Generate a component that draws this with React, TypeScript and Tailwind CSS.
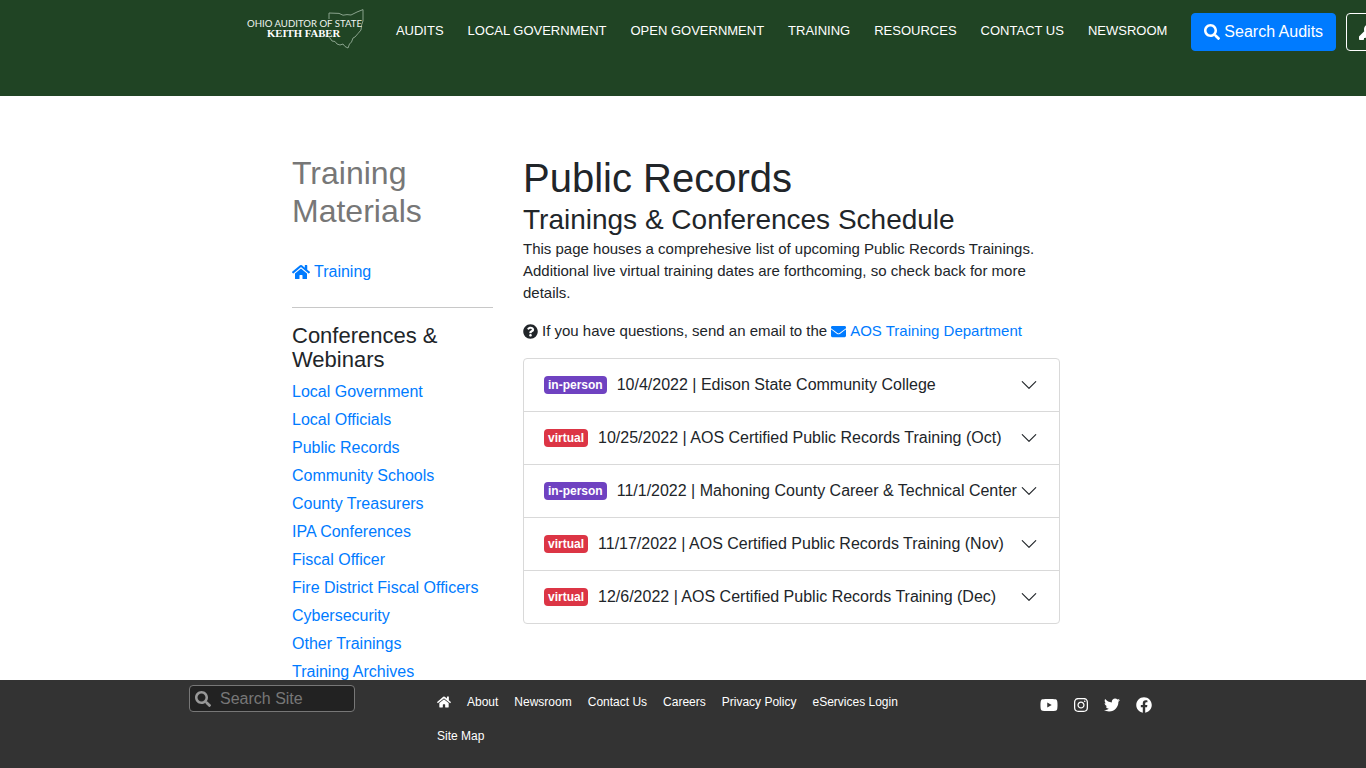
import React from "react";
import {
  FaSearch, FaHome, FaQuestionCircle, FaEnvelope, FaKey,
  FaYoutube, FaInstagram, FaTwitter, FaFacebook,
} from "react-icons/fa";
import { BsChevronDown } from "react-icons/bs";

const navItems = ["AUDITS", "LOCAL GOVERNMENT", "OPEN GOVERNMENT", "TRAINING", "RESOURCES", "CONTACT US", "NEWSROOM"];

const sideLinks = [
  "Local Government", "Local Officials", "Public Records", "Community Schools", "County Treasurers",
  "IPA Conferences", "Fiscal Officer", "Fire District Fiscal Officers", "Cybersecurity",
  "Other Trainings", "Training Archives",
];

const trainings = [
  { kind: "in-person", title: "10/4/2022 | Edison State Community College" },
  { kind: "virtual", title: "10/25/2022 | AOS Certified Public Records Training (Oct)" },
  { kind: "in-person", title: "11/1/2022 | Mahoning County Career & Technical Center" },
  { kind: "virtual", title: "11/17/2022 | AOS Certified Public Records Training (Nov)" },
  { kind: "virtual", title: "12/6/2022 | AOS Certified Public Records Training (Dec)" },
];

const footerLinks = ["About", "Newsroom", "Contact Us", "Careers", "Privacy Policy", "eServices Login", "Site Map"];

const socials = [
  { name: "YouTube", Icon: FaYoutube, size: "h-4 w-[18px]" },
  { name: "Instagram", Icon: FaInstagram, size: "h-4 w-[14px]" },
  { name: "Twitter", Icon: FaTwitter, size: "size-4" },
  { name: "Facebook", Icon: FaFacebook, size: "size-4" },
];

function Logo() {
  return (
    <svg width="118" height="42" viewBox="0 0 118 42" role="img" aria-label="Ohio Auditor of State Keith Faber">
      <path
        d="M83 11V5L93 5.4L97 7.2L101 6.6L105 7L111 4L117 1.6V13L115.6 17L115 22L112 25.500L109 29L107 30L105.500 34L103.500 36L102 40L99 38.500L97 36L94 37L91 36L89 33.500L86 33L84 30L82.500 29"
        fill="none" stroke="#94ad97" strokeWidth="0.9" strokeLinejoin="round"
      />
      <text x="1" y="19" fontSize="9.6" fill="#eef3ee" className="font-[Lato,sans-serif]">OHIO AUDITOR OF STATE</text>
      <text x="21" y="29" fontSize="10.7" fontWeight="700" fill="#ffffff" className="font-['Liberation_Serif',serif]">KEITH FABER</text>
    </svg>
  );
}

export default function App() {
  return (
    <div className="flex h-screen flex-col overflow-hidden bg-white font-['Liberation_Sans',Arial,sans-serif] text-base text-[#212529]">
      <header className="flex h-24 shrink-0 items-start overflow-hidden bg-[#204424] pl-[18%] whitespace-nowrap">
        <a href="#home" className="mt-2 mr-5 shrink-0"><Logo /></a>
        <nav className="mt-5 flex shrink-0 text-[13px] leading-[22px] text-white">
          {navItems.map((item) => (
            <a key={item} href="#nav" className="px-3">{item}</a>
          ))}
        </nav>
        <button className="mt-[13px] ml-3 flex h-[38px] shrink-0 items-center gap-1 rounded border border-[#007bff] bg-[#007bff] px-3 text-white">
          <FaSearch className="size-4" />Search Audits
        </button>
        <button aria-label="Login" className="mt-[13px] ml-[10px] flex h-[38px] shrink-0 items-center rounded border border-white px-3 text-white">
          <FaKey className="size-4" />
        </button>
      </header>

      <main className="min-h-0 flex-1 overflow-y-auto [scrollbar-width:none]">
        <div className="mx-auto flex max-w-[782px] gap-[30px] pt-[58px] pr-[14px]">
          <aside className="w-[201px] shrink-0">
            <h2 className="text-[32px] leading-[38px] text-[#777777]">Training Materials</h2>
            <a href="#training" className="mt-[30px] flex items-center gap-1 leading-6 text-[#007bff]">
              <FaHome className="size-[18px]" />Training
            </a>
            <hr className="mt-[23px] mb-4 border-[#c8c8c8]" />
            <h3 className="text-[22px] leading-6">Conferences &amp; Webinars</h3>
            <ul className="mt-2">
              {sideLinks.map((link) => (
                <li key={link} className="mb-1 leading-6 whitespace-nowrap">
                  <a href="#list" className="text-[#007bff]">{link}</a>
                </li>
              ))}
            </ul>
          </aside>

          <section className="min-w-0 flex-1">
            <h1 className="text-[40px] leading-12">Public Records</h1>
            <h2 className="text-[28px] leading-9">Trainings &amp; Conferences Schedule</h2>
            <p className="text-[15px] leading-[22px]">
              This page houses a comprehesive list of upcoming Public Records Trainings. Additional live virtual
              training dates are forthcoming, so check back for more details.
            </p>
            <p className="mt-4 flex items-center gap-1 text-[15px] leading-[22px] whitespace-nowrap">
              <FaQuestionCircle className="size-[15px]" />
              If you have questions, send an email to the
              <a href="#email" className="flex items-center gap-1 text-[#007bff]">
                <FaEnvelope className="size-[15px]" />AOS Training Department
              </a>
            </p>
            <div className="mt-4 divide-y divide-[#d9d9d9] rounded border border-[#d9d9d9]">
              {trainings.map(({ kind, title }) => (
                <button key={title} className="flex w-full items-center py-[14px] pr-[21px] pl-5 text-left leading-6 whitespace-nowrap">
                  <span className={kind === "virtual"
                    ? "rounded bg-[#dc3545] px-1 text-[12px] leading-[18px] font-bold text-white"
                    : "rounded bg-[#6f42c1] px-1 text-[12px] leading-[18px] font-bold text-white"}>
                    {kind}
                  </span>
                  <span className="ml-[10px] min-w-0 flex-1">{title}</span>
                  <BsChevronDown className="size-[18px] shrink-0" />
                </button>
              ))}
            </div>
          </section>
        </div>
      </main>

      <footer className="h-[88px] shrink-0 bg-[#333333] text-white">
        <div className="mx-auto flex max-w-[988px] items-start pr-[25px]">
          <label className="mt-[5px] flex h-[27px] w-[166px] items-center gap-[9px] rounded border border-[#777777] bg-[#222222] pl-[5px]">
            <FaSearch className="size-4 shrink-0 text-[#999999]" />
            <input type="search" aria-label="Search Site" placeholder="Search Site" className="w-full min-w-0 bg-transparent text-base outline-none placeholder:text-[#777777]" />
          </label>
          <nav className="mt-[5px] ml-[82px] flex w-[500px] flex-wrap gap-x-4 text-[12px] leading-[34px]">
            <a href="#home" aria-label="Home" className="flex h-[34px] items-center"><FaHome className="size-[14px]" /></a>
            {footerLinks.map((link) => (
              <a key={link} href="#footer">{link}</a>
            ))}
          </nav>
          <div className="mt-[17px] ml-auto flex gap-4">
            {socials.map(({ name, Icon, size }) => (
              <a key={name} href="#social" aria-label={name}><Icon className={size} /></a>
            ))}
          </div>
        </div>
      </footer>
    </div>
  );
}
